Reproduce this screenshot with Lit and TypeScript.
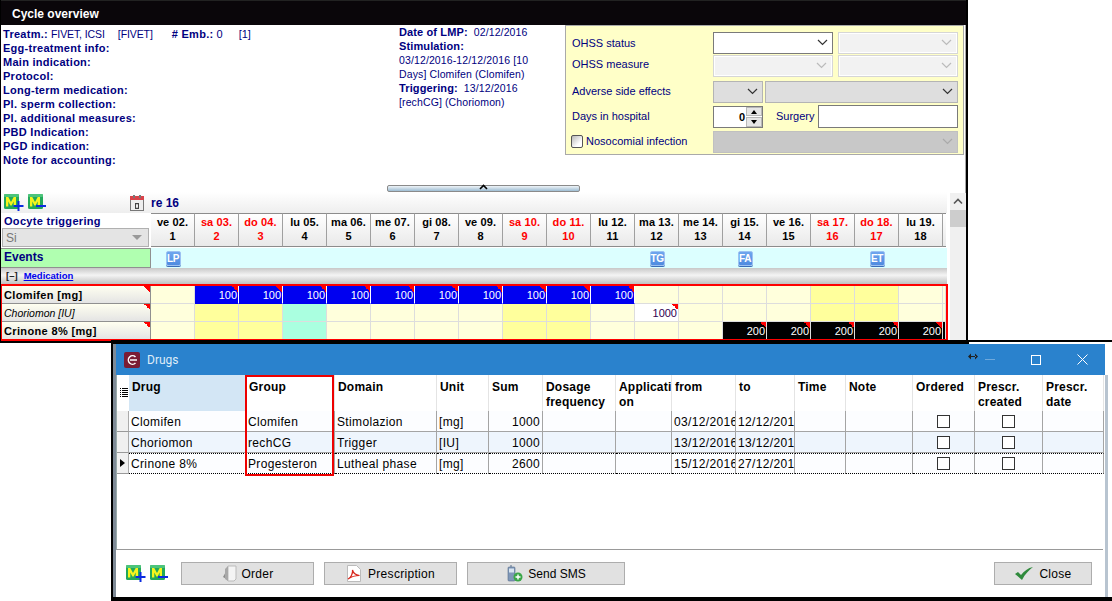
import { LitElement, html, css, svg } from 'lit';
import { customElement } from 'lit/decorators.js';

const chevron = (color = '#333') => html`<svg width="11" height="7" viewBox="0 0 11 7"><path d="M1 1l4.500 4.500L10 1" fill="none" stroke=${color} stroke-width="1.2"/></svg>`;

const mIcon = (plus: boolean) => html`<svg class="micon" width="21" height="18" viewBox="0 0 21 18">
  <rect x="1" y="0" width="15" height="15" rx="1.500" fill="#22a85a"/>
  <rect x="1" y="0" width="15" height="3" rx="1" fill="#4cc47a"/>
  <path d="M3 12.500V3h2.300L8 8l2.700-5H13v9.500h-2.300V7.500L8.600 11.500H7.400L5.300 7.500v5z" fill="#f6f41c"/>
  ${plus ? svg`<path d="M15.500 7v10M10.500 12h10" stroke="#0a2be0" stroke-width="2"/>` : svg`<path d="M9 12h10" stroke="#0a2be0" stroke-width="2"/>`}
</svg>`;

type Cell = { bg: string; text?: string };

const days = [
  ['ve 02.', '1', 0], ['sa 03.', '2', 1], ['do 04.', '3', 1], ['lu 05.', '4', 0], ['ma 06.', '5', 0], ['me 07.', '6', 0],
  ['gi 08.', '7', 0], ['ve 09.', '8', 0], ['sa 10.', '9', 1], ['do 11.', '10', 1], ['lu 12.', '11', 0], ['ma 13.', '12', 0],
  ['me 14.', '13', 0], ['gi 15.', '14', 0], ['ve 16.', '15', 0], ['sa 17.', '16', 1], ['do 18.', '17', 1], ['lu 19.', '18', 0],
] as const;

const weekend = [1, 2, 8, 9, 15, 16];
const baseCell = (i: number): string => {
  if (weekend.includes(i)) return 'wk';
  if (i === 3) return 'gr';
  return 'pl';
};

const medRows = [
  {
    name: 'Clomifen [mg]', cls: 'strong',
    cell: (i: number): Cell => (i >= 1 && i <= 10 ? { bg: 'bl', text: '100' } : { bg: baseCell(i) }),
  },
  {
    name: 'Choriomon [IU]', cls: 'ital',
    cell: (i: number): Cell => (i === 11 ? { bg: 'wh', text: '1000' } : { bg: baseCell(i) }),
  },
  {
    name: 'Crinone 8% [mg]', cls: 'strong',
    cell: (i: number): Cell => (i >= 13 ? { bg: 'bk', text: '200' } : { bg: baseCell(i) }),
  },
];

const columns = ['Drug', 'Group', 'Domain', 'Unit', 'Sum', 'Dosage frequency', 'Applicati on', 'from', 'to', 'Time', 'Note', 'Ordered', 'Prescr. created', 'Prescr. date'];

const drugs = [
  ['Clomifen', 'Clomifen', 'Stimolazion', '[mg]', '1000', '03/12/2016', '12/12/2016'],
  ['Choriomon', 'rechCG', 'Trigger', '[IU]', '1000', '13/12/2016', '13/12/2016'],
  ['Crinone 8%', 'Progesteron', 'Lutheal phase', '[mg]', '2600', '15/12/2016', '27/12/2016'],
];

@customElement('app-root')
export class AppRoot extends LitElement {
  static styles = css`
    :host { display: block; position: relative; width: 1112px; height: 601px; overflow: hidden; background: #fff; font-family: "Liberation Sans", Arial, sans-serif; }
    .back { position: absolute; left: 0; top: 0; width: 968px; height: 343px; box-sizing: border-box; border-left: 1px solid #000; border-right: 2px solid #000; border-bottom: 2px solid #000; background: #fff; display: flex; flex-direction: column; box-shadow: inset -1px 0 0 #a8a8a8; overflow: hidden; }
    .back-title { flex: none; height: 25px; background: #0a060a; color: #fff; font-weight: bold; font-size: 12px; line-height: 26px; padding-left: 11px; border-top: 1px solid #222; box-sizing: border-box; }
    .top { flex: none; height: 160px; display: flex; }
    .info { width: 396px; flex: none; padding: 2px 0 0 2px; font-size: 11px; line-height: 14px; color: #000080; }
    .info div { white-space: nowrap; }
    .info b { font-weight: bold; letter-spacing: .27px; }
    .info .thin { font-size: 10.5px; letter-spacing: -.1px; }
    .info .gap { display: inline-block; }
    .lmp { width: 166px; flex: none; font-size: 10.5px; letter-spacing: .12px; line-height: 14px; color: #000080; box-sizing: border-box; }
    .lmp div { white-space: nowrap; }
    .lmp b { font-size: 11px; }
    .panel { flex: none; width: 399px; height: 130px; box-sizing: border-box; background: #ffffc8; border: 1px solid #a9a9a9; padding: 5px 5px 0 6px; font-size: 11px; color: #000080; display: flex; flex-direction: column; }
    .prow { display: flex; align-items: center; height: 23px; flex: none; }
    .prow label { width: 141px; flex: none; white-space: nowrap; }
    .prow label.up2 { margin-top: -2px; }
    .sel { box-sizing: border-box; height: 22px; display: flex; align-items: center; justify-content: flex-end; padding-right: 4px; border: 1px solid #7a7a7a; background: #fff; }
    .sel.dis { background: #f2f2f2; border: 2px solid #fff; outline: 1px solid #d6d6d6; outline-offset: -1px; }
    .sel.gray { background: #dedede; border-color: #b4b4b4; }
    .sel.dark { background: #c8c8c8; border-color: #c0c0c0; }
    .w120 { width: 120px; }
    .w50 { width: 50px; }
    .ml5 { margin-left: 5px; }
    .ml2 { margin-left: 2px; }
    .spin { box-sizing: border-box; width: 50px; height: 22px; border: 1px solid #7a7a7a; background: #fff; display: flex; align-items: stretch; color: #000; font-weight: bold; font-size: 11px; }
    .spin span { flex: 1; text-align: right; line-height: 20px; padding-right: 1px; }
    .spin i { width: 16px; display: flex; flex-direction: column; gap: 1px; }
    .spin i em { flex: 1; background: #e6e6e6; border: 1px solid #b8b8b8; }
    .tri-u, .tri-d { display: block; width: 0; height: 0; margin: 2px auto 0; border-left: 3px solid transparent; border-right: 3px solid transparent; }
    .tri-u { border-bottom: 4px solid #000; }
    .tri-d { border-top: 4px solid #000; }
    .surg { margin-left: 13px; width: 42px; white-space: nowrap; margin-top: -2px; }
    .input { box-sizing: border-box; width: 140px; height: 23px; background: #fff; border: 1px solid #7a7a7a; }
    .check { box-sizing: border-box; width: 12px; height: 13px; border: 1px solid #555; border-radius: 2px; background: linear-gradient(135deg, #b8b8b8, #fff 70%); margin-right: 3px; margin-left: -1px; flex: none; }
    .noso { width: 127px; flex: none; white-space: nowrap; margin-top: -2px; }
    .splitter { flex: none; align-self: flex-start; margin-left: 386px; width: 193px; height: 7px; box-sizing: border-box; border: 1px solid #8a8a8a; border-radius: 2px; background: linear-gradient(#eef3f7, #9dbdd3); display: flex; justify-content: center; }
    .splitter svg { margin-top: -2px; }
    .planner { flex: 1; display: flex; min-height: 0; }
    .pmain { width: 946px; flex: none; display: flex; flex-direction: column; }
    .toolbar { flex: none; height: 21px; display: flex; align-items: center; padding-left: 2px; background: linear-gradient(#fff, #eeeeee); }
    .micon { flex: none; margin-right: 3px; }
    .cal { margin-left: 79px; margin-right: 7px; flex: none; }
    .toolbar b { color: #000080; font-size: 12px; }
    .hgrid { display: grid; grid-template-columns: 150px repeat(18, 44px) 3px; flex: none; }
    .trig { display: flex; flex-direction: column; padding-left: 3px; padding-top: 1px; color: #000080; font-weight: bold; font-size: 11px; background: #fff; }
    .trig span { line-height: 14px; letter-spacing: .3px; }
    .trig .si { box-sizing: border-box; width: 147px; height: 19px; margin-left: -2px; background: #e4e4e4; border: 1px solid #b0b0b0; color: #777; font-weight: normal; display: flex; justify-content: space-between; align-items: center; padding: 0 6px 0 3px; font-size: 12px; line-height: 16px; }
    .trig .si i { width: 0; height: 0; border-left: 5px solid transparent; border-right: 5px solid transparent; border-top: 5px solid #999; }
    .day { height: 34px; box-sizing: border-box; border-top: 1px solid #8c8c8c; border-right: 1px solid #a0a0a0; border-bottom: 1px solid #8c8c8c; background: linear-gradient(#fff, #e9e9e9); text-align: center; font-size: 11px; font-weight: bold; line-height: 14px; padding-top: 1px; color: #000; white-space: nowrap; letter-spacing: .1px; }
    .day.red { color: #f00; }
    .day.stub { border-right: none; color: transparent; }
    .events { display: grid; grid-template-columns: 150px 1fr; height: 20px; margin-top: 1px; flex: none; }
    .events .lab { background: #b0ffb0; border: 1px solid #909090; border-left: none; padding-left: 3px; font-size: 12px; font-weight: bold; color: #000080; line-height: 17px; box-sizing: border-box; }
    .evline { background: #dcffff; display: grid; grid-template-columns: repeat(18, 44px); align-items: center; }
    .tag { width: 15px; height: 15px; border-radius: 2px; background: linear-gradient(#6ea6ee, #4f8be0); border: 1px solid #9cc1f2; box-sizing: border-box; color: #fff; font-size: 10px; font-weight: bold; line-height: 13px; text-align: center; justify-self: center; box-shadow: 0 1px 0 #3a6db8; letter-spacing: -.3px; }
    .medhead { flex: none; height: 16px; font-size: 9.5px; padding-left: 5px; display: flex; gap: 6px; align-items: center; background: linear-gradient(#c8c8c8 0, #f4f4f4 45%, #c0c0c0 100%); line-height: 14px; }
    .medhead b { color: #222; font-weight: bold; }
    .medhead a { color: #0000ee; font-weight: bold; text-decoration: underline; }
    .meds { flex: 1; box-sizing: border-box; border: solid #f00; border-width: 2px 2px 2px 1px; margin-right: -1px; overflow: hidden; display: grid; grid-template-columns: 149px repeat(18, 44px) 3px; grid-auto-rows: 18px; }
    .mname { box-sizing: border-box; border-bottom: 1px solid #909090; border-right: 1px solid #909090; background: linear-gradient(#fffff0, #e4e4e4); font-size: 11px; line-height: 18px; padding-left: 2px; color: #000; white-space: nowrap; }
    .mname.strong { font-weight: bold; letter-spacing: .35px; }
    .mname.ital { font-style: italic; font-size: 10.5px; }
    .flag { background-image: linear-gradient(45deg, transparent 50%, #f00 50%); background-size: 6px 6px; background-repeat: no-repeat; background-position: top right; }
    .mname.flag { background-image: linear-gradient(45deg, transparent 50%, #f00 50%), linear-gradient(#fffff0, #e4e4e4); background-size: 6px 6px, auto; background-position: top right, 0 0; }
    .c { box-sizing: border-box; border-right: 1px solid #ddd; border-bottom: 1px solid #ddd; font-size: 11px; line-height: 18px; text-align: right; padding-right: 1px; }
    .c.pl { background-color: #ffffdc; }
    .c.wk { background-color: #ffff9c; }
    .c.gr { background-color: #aaffe0; }
    .c.wh { background-color: #fff; color: #300050; }
    .c.bl { background-color: #0000f0; color: #fff; border-right-color: #fff; border-bottom-color: #0000f0; }
    .c.bk { background-color: #000; color: #fff; border-bottom-color: #000; }
    .sbar { width: 16px; flex: none; margin-left: 3px; background: #f0f0f0; display: flex; flex-direction: column; margin-top: 1px; }
    .sbar .up { height: 17px; display: flex; align-items: center; justify-content: center; }
    .sbar .th { height: 17px; background: #cdcdcd; }

    .front { position: absolute; left: 111px; top: 340px; width: 1001px; height: 261px; box-sizing: border-box; border-top: 2px solid #000; border-left: 2px solid #000; border-bottom: 4px solid #000; background: #fff; padding: 0 7px 0 3px; display: flex; flex-direction: column; }
    .f-top { flex: none; height: 2px; margin: 0 -7px 0 -5px; background: linear-gradient(to right, #000 858px, #fff 858px); }
    .f-side { position: absolute; left: 0; top: 2px; bottom: 0; width: 3px; background: #7e8a96; }
    .f-title { flex: none; height: 31px; background: #2a82cd; display: flex; align-items: center; color: #dfecf8; font-family: Roboto, "Liberation Sans", sans-serif; font-size: 12px; }
    .f-logo { margin-left: 8px; margin-right: 7px; flex: none; }
    .f-name { flex: 1; }
    .f-ctl { flex: none; display: flex; align-items: center; color: #fff; }
    .f-ctl svg { display: block; }
    .resize { margin-right: 7px; margin-top: -7px; }
    .dash { margin-right: 36px; }
    .maxi { margin-right: 36px; }
    .xbtn { margin-right: 17px; }
    .table-wrap { flex: 1; position: relative; min-height: 0; border-left: 1px solid #9aa; border-bottom: 1px solid #999; margin-right: 2px; }
    .tbl { display: grid; grid-template-columns: 12px 117px 89px 102px 52px 54px 73px 56px 64px 59px 51px 67px 62px 68px 61px; grid-template-rows: 36px 21px 21px 21px; font-size: 12px; letter-spacing: .35px; color: #000; }
    .hd { box-sizing: border-box; font-weight: bold; padding: 5px 0 0 3px; line-height: 15px; border-right: 1px solid #e4e4e4; background: #fff; letter-spacing: .2px; overflow: hidden; }
    .hd.sel1 { background: #d3e6f5; border-right: none; }
    .gripc { box-sizing: border-box; padding: 11px 0 0 3px; }
    .rh { background: #f0f0f0; box-sizing: border-box; border-bottom: 1px solid #999; border-right: 1px solid #aaa; display: flex; align-items: center; justify-content: center; }
    .rh i { width: 0; height: 0; border-top: 4px solid transparent; border-bottom: 4px solid transparent; border-left: 5px solid #000; }
    .td { box-sizing: border-box; padding: 0 2px; line-height: 22px; height: 21px; border-right: 1px solid #a4a4a4; border-bottom: 1px solid #a4a4a4; white-space: nowrap; overflow: hidden; background: #fcfdff; display: flex; }
    .td.r { justify-content: flex-end; }
    .td.ctr { justify-content: center; align-items: center; }
    .alt { background: #eef5fd; }
    .focus { border-top: 1px dotted #000; border-bottom: 1px dotted #000; line-height: 20px; }
    .box { width: 13px; height: 13px; border: 1px solid #333; box-sizing: border-box; background: #fff; }
    .redbox { position: absolute; left: 128px; top: 0; width: 89px; height: 101px; box-sizing: border-box; border: 2px solid #e00; pointer-events: none; }
    .f-foot { flex: none; height: 47px; display: flex; align-items: center; padding: 0 13px 0 9px; }
    .btn { box-sizing: border-box; height: 23px; background: #e1e1e1; border: 1px solid #adadad; display: flex; align-items: center; justify-content: center; gap: 3px; font-size: 12px; letter-spacing: .3px; color: #000; flex: none; }
    .btn svg { flex: none; }
    .b-order { width: 133px; margin-left: 8px; }
    .b-pres { width: 133px; margin-left: 10px; }
    .b-sms { width: 158px; margin-left: 10px; letter-spacing: 0; }
    .b-close { width: 98px; margin-left: auto; }
    .rstrip { position: absolute; right: 4px; top: 375px; width: 3px; height: 222px; background: #b8c4d0; }
  `;

  render() {
    return html`
      <div class="back">
        <div class="back-title">Cycle overview</div>
        <div class="top">
          <div class="info">
            <div><b>Treatm.:</b> <span class="thin">FIVET, ICSI</span> <span class="gap" style="width:10px"></span><span class="thin">[FIVET]</span> <span class="gap" style="width:16px"></span><b># Emb.:</b> 0 <span class="gap" style="width:13px"></span>[1]</div>
            <div><b>Egg-treatment info:</b></div>
            <div><b>Main indication:</b></div>
            <div><b>Protocol:</b></div>
            <div><b>Long-term medication:</b></div>
            <div><b>Pl. sperm collection:</b></div>
            <div><b>Pl. additional measures:</b></div>
            <div><b>PBD Indication:</b></div>
            <div><b>PGD indication:</b></div>
            <div><b>Note for accounting:</b></div>
          </div>
          <div class="lmp">
            <div><b>Date of LMP:</b>&nbsp; 02/12/2016</div>
            <div><b>Stimulation:</b></div>
            <div>03/12/2016-12/12/2016 [10</div>
            <div>Days] Clomifen (Clomifen)</div>
            <div><b>Triggering:</b>&nbsp; 13/12/2016</div>
            <div>[rechCG] (Choriomon)</div>
          </div>
          <div class="panel">
            <div class="prow"><label>OHSS status</label><div class="sel w120">${chevron()}</div><div class="sel dis w120 ml5">${chevron('#bbb')}</div></div>
            <div class="prow"><label style="margin-top:-3px">OHSS measure</label><div class="sel dis w120">${chevron('#bbb')}</div><div class="sel dis w120 ml5">${chevron('#bbb')}</div></div>
            <div class="prow" style="margin-top:3px"><label class="up2">Adverse side effects</label><div class="sel gray w50">${chevron()}</div><div class="sel gray ml2" style="width:194px">${chevron()}</div></div>
            <div class="prow" style="margin-top:2px"><label class="up2">Days in hospital</label><div class="spin"><span>0</span><i><em><b class="tri-u"></b></em><em><b class="tri-d"></b></em></i></div><div class="surg">Surgery</div><div class="input"></div></div>
            <div class="prow" style="margin-top:2px"><div class="check"></div><div class="noso">Nosocomial infection</div><div class="sel dark" style="width:246px">${chevron('#aaa')}</div></div>
          </div>
        </div>
        <div class="splitter"><svg width="9" height="6" viewBox="0 0 9 6"><path d="M1 5l3.500-3.500L8 5" fill="none" stroke="#000" stroke-width="1.6"/></svg></div>
        <div class="planner">
          <div class="pmain">
            <div class="toolbar">
              ${mIcon(true)}${mIcon(false)}
              <svg class="cal" width="14" height="16" viewBox="0 0 14 16"><rect x=".5" y="1.500" width="13" height="14" fill="#eee" stroke="#777"/><rect x="0" y="1" width="14" height="4" fill="#d8434a"/><rect x="3" y="0" width="2" height="3" fill="#777"/><rect x="9" y="0" width="2" height="3" fill="#777"/><path d="M5 8h4v6H5zM6 9.300v3.400h2V9.300z" fill="#444" fill-rule="evenodd"/></svg>
              <b>re 16</b>
            </div>
            <div class="hgrid">
              <div class="trig"><span>Oocyte triggering</span><div class="si">Si<i></i></div></div>
              ${days.map(d => html`<div class="day ${d[2] ? 'red' : ''}">${d[0]}<br>${d[1]}</div>`)}
              <div class="day stub"></div>
            </div>
            <div class="events">
              <div class="lab">Events</div>
              <div class="evline">
                ${days.map((_, i) => {
                  const tags: Record<number, string> = { 0: 'LP', 11: 'TG', 13: 'FA', 16: 'ET' };
                  return tags[i] ? html`<div class="tag">${tags[i]}</div>` : html`<span></span>`;
                })}
              </div>
            </div>
            <div class="medhead"><b>[–]</b><a>Medication</a></div>
            <div class="meds">
              ${medRows.map(r => html`
                <div class="mname ${r.cls} flag">${r.name}</div>
                ${days.map((_, i) => {
                  const c = r.cell(i);
                  return html`<div class="c ${c.bg} ${c.text ? 'flag' : ''}">${c.text ?? ''}</div>`;
                })}
                <div class="c ${r === medRows[2] ? 'bk' : 'pl'}"></div>
              `)}
            </div>
          </div>
          <div class="sbar">
            <div class="up"><svg width="10" height="7" viewBox="0 0 10 7"><path d="M1 5.500l4-4 4 4" fill="none" stroke="#555" stroke-width="1.6"/></svg></div>
            <div class="th"></div>
          </div>
        </div>
      </div>

      <div class="front">
        <div class="f-side"></div>
        <div class="f-top"></div>
        <div class="f-title">
          <svg class="f-logo" width="16" height="16" viewBox="0 0 16 16"><rect width="16" height="16" rx="2" fill="#7a1c34"/><path d="M11.500 5A4.200 4.200 0 1 0 11.500 11" fill="none" stroke="#fff" stroke-width="1.500"/><path d="M6 8h7" stroke="#fff" stroke-width="1.500"/></svg>
          <div class="f-name">Drugs</div>
          <div class="f-ctl">
            <svg class="resize" width="10" height="7" viewBox="0 0 10 7"><path d="M0 3.500L3 .5v6zM10 3.500L7 .5v6zM2 3h6v1H2z" fill="#222"/></svg>
            <svg class="dash" width="10" height="1" viewBox="0 0 10 1"><rect width="10" height="1" fill="#6fa9dc"/></svg>
            <svg class="maxi" width="10" height="10" viewBox="0 0 10 10"><rect x=".5" y=".5" width="9" height="9" fill="none" stroke="#fff"/></svg>
            <svg class="xbtn" width="11" height="11" viewBox="0 0 11 11"><path d="M.5.5l10 10M10.500.5l-10 10" stroke="#fff"/></svg>
          </div>
        </div>
        <div class="table-wrap">
          <div class="tbl">
            <div class="gripc"><svg width="8" height="9" viewBox="0 0 8 9"><path d="M0 0h1v1H0zM2 0h6v1H2zM0 2h1v1H0zM2 2h6v1H2zM0 4h1v1H0zM2 4h6v1H2zM0 6h1v1H0zM2 6h6v1H2zM0 8h1v1H0zM2 8h6v1H2z" fill="#000"/></svg></div>
            ${columns.map((c, i) => html`<div class="hd ${i === 0 ? 'sel1' : ''}">${c}</div>`)}
            ${drugs.map((d, ri) => {
              const rowCls = `${ri === 1 ? 'alt' : ''} ${ri === 2 ? 'focus' : ''}`;
              const td = (t: string, extra = '') => html`<div class="td ${rowCls} ${extra}">${t}</div>`;
              return html`
                <div class="rh">${ri === 2 ? html`<i></i>` : ''}</div>
                ${td(d[0])}${td(d[1])}${td(d[2])}${td(d[3])}${td(d[4], 'r')}${td('')}${td('')}${td(d[5])}${td(d[6])}${td('')}${td('')}
                <div class="td ctr ${rowCls}"><div class="box"></div></div>
                <div class="td ctr ${rowCls}"><div class="box"></div></div>
                ${td('')}
              `;
            })}
          </div>
          <div class="redbox"></div>
        </div>
        <div class="f-foot">
          ${mIcon(true)}${mIcon(false)}
          <div class="btn b-order">
            <svg width="17" height="17" viewBox="0 0 17 17"><path d="M7 1h8v13l-2 2H7z" fill="#f4f4f4" stroke="#bbb"/><path d="M2 12l5-9v12z" fill="#8d8d8d"/><path d="M7 1l-3 3v10l3 2z" fill="#a8a8a8"/></svg>
            <span>Order</span>
          </div>
          <div class="btn b-pres">
            <svg width="16" height="17" viewBox="0 0 16 17"><path d="M1.500.5h9l4 4v12h-13z" fill="#fff" stroke="#bbb"/><path d="M2 14c3-1 5-6 4.500-9 1 4 3 5 7 5.500-4 0-8 1-11.500 3.500z" fill="none" stroke="#d8261c" stroke-width="1.200"/></svg>
            <span style="margin-left:3px">Prescription</span>
          </div>
          <div class="btn b-sms">
            <svg width="19" height="17" viewBox="0 0 19 17"><rect x="2" y="2" width="7" height="14" rx="1" fill="#7f97b8" stroke="#556c8c" stroke-width=".6"/><rect x="3" y="3.500" width="5" height="4" fill="#d8e4f0"/><path d="M5 2V0" stroke="#556c8c"/><circle cx="12" cy="12" r="4.500" fill="#3aa648"/><path d="M12 9.500v5M9.500 12h5" stroke="#fff" stroke-width="1.400"/></svg>
            <span>Send SMS</span>
          </div>
          <div class="btn b-close">
            <svg width="20" height="15" viewBox="0 0 20 15"><path d="M1 8l3-2 3 3C10 5 14 2 19 1c-4 3-8 7-11 13z" fill="#2f8a3c"/></svg>
            <span style="margin-left:2px">Close</span>
          </div>
        </div>
      </div>
      <div class="rstrip"></div>
    `;
  }
}
